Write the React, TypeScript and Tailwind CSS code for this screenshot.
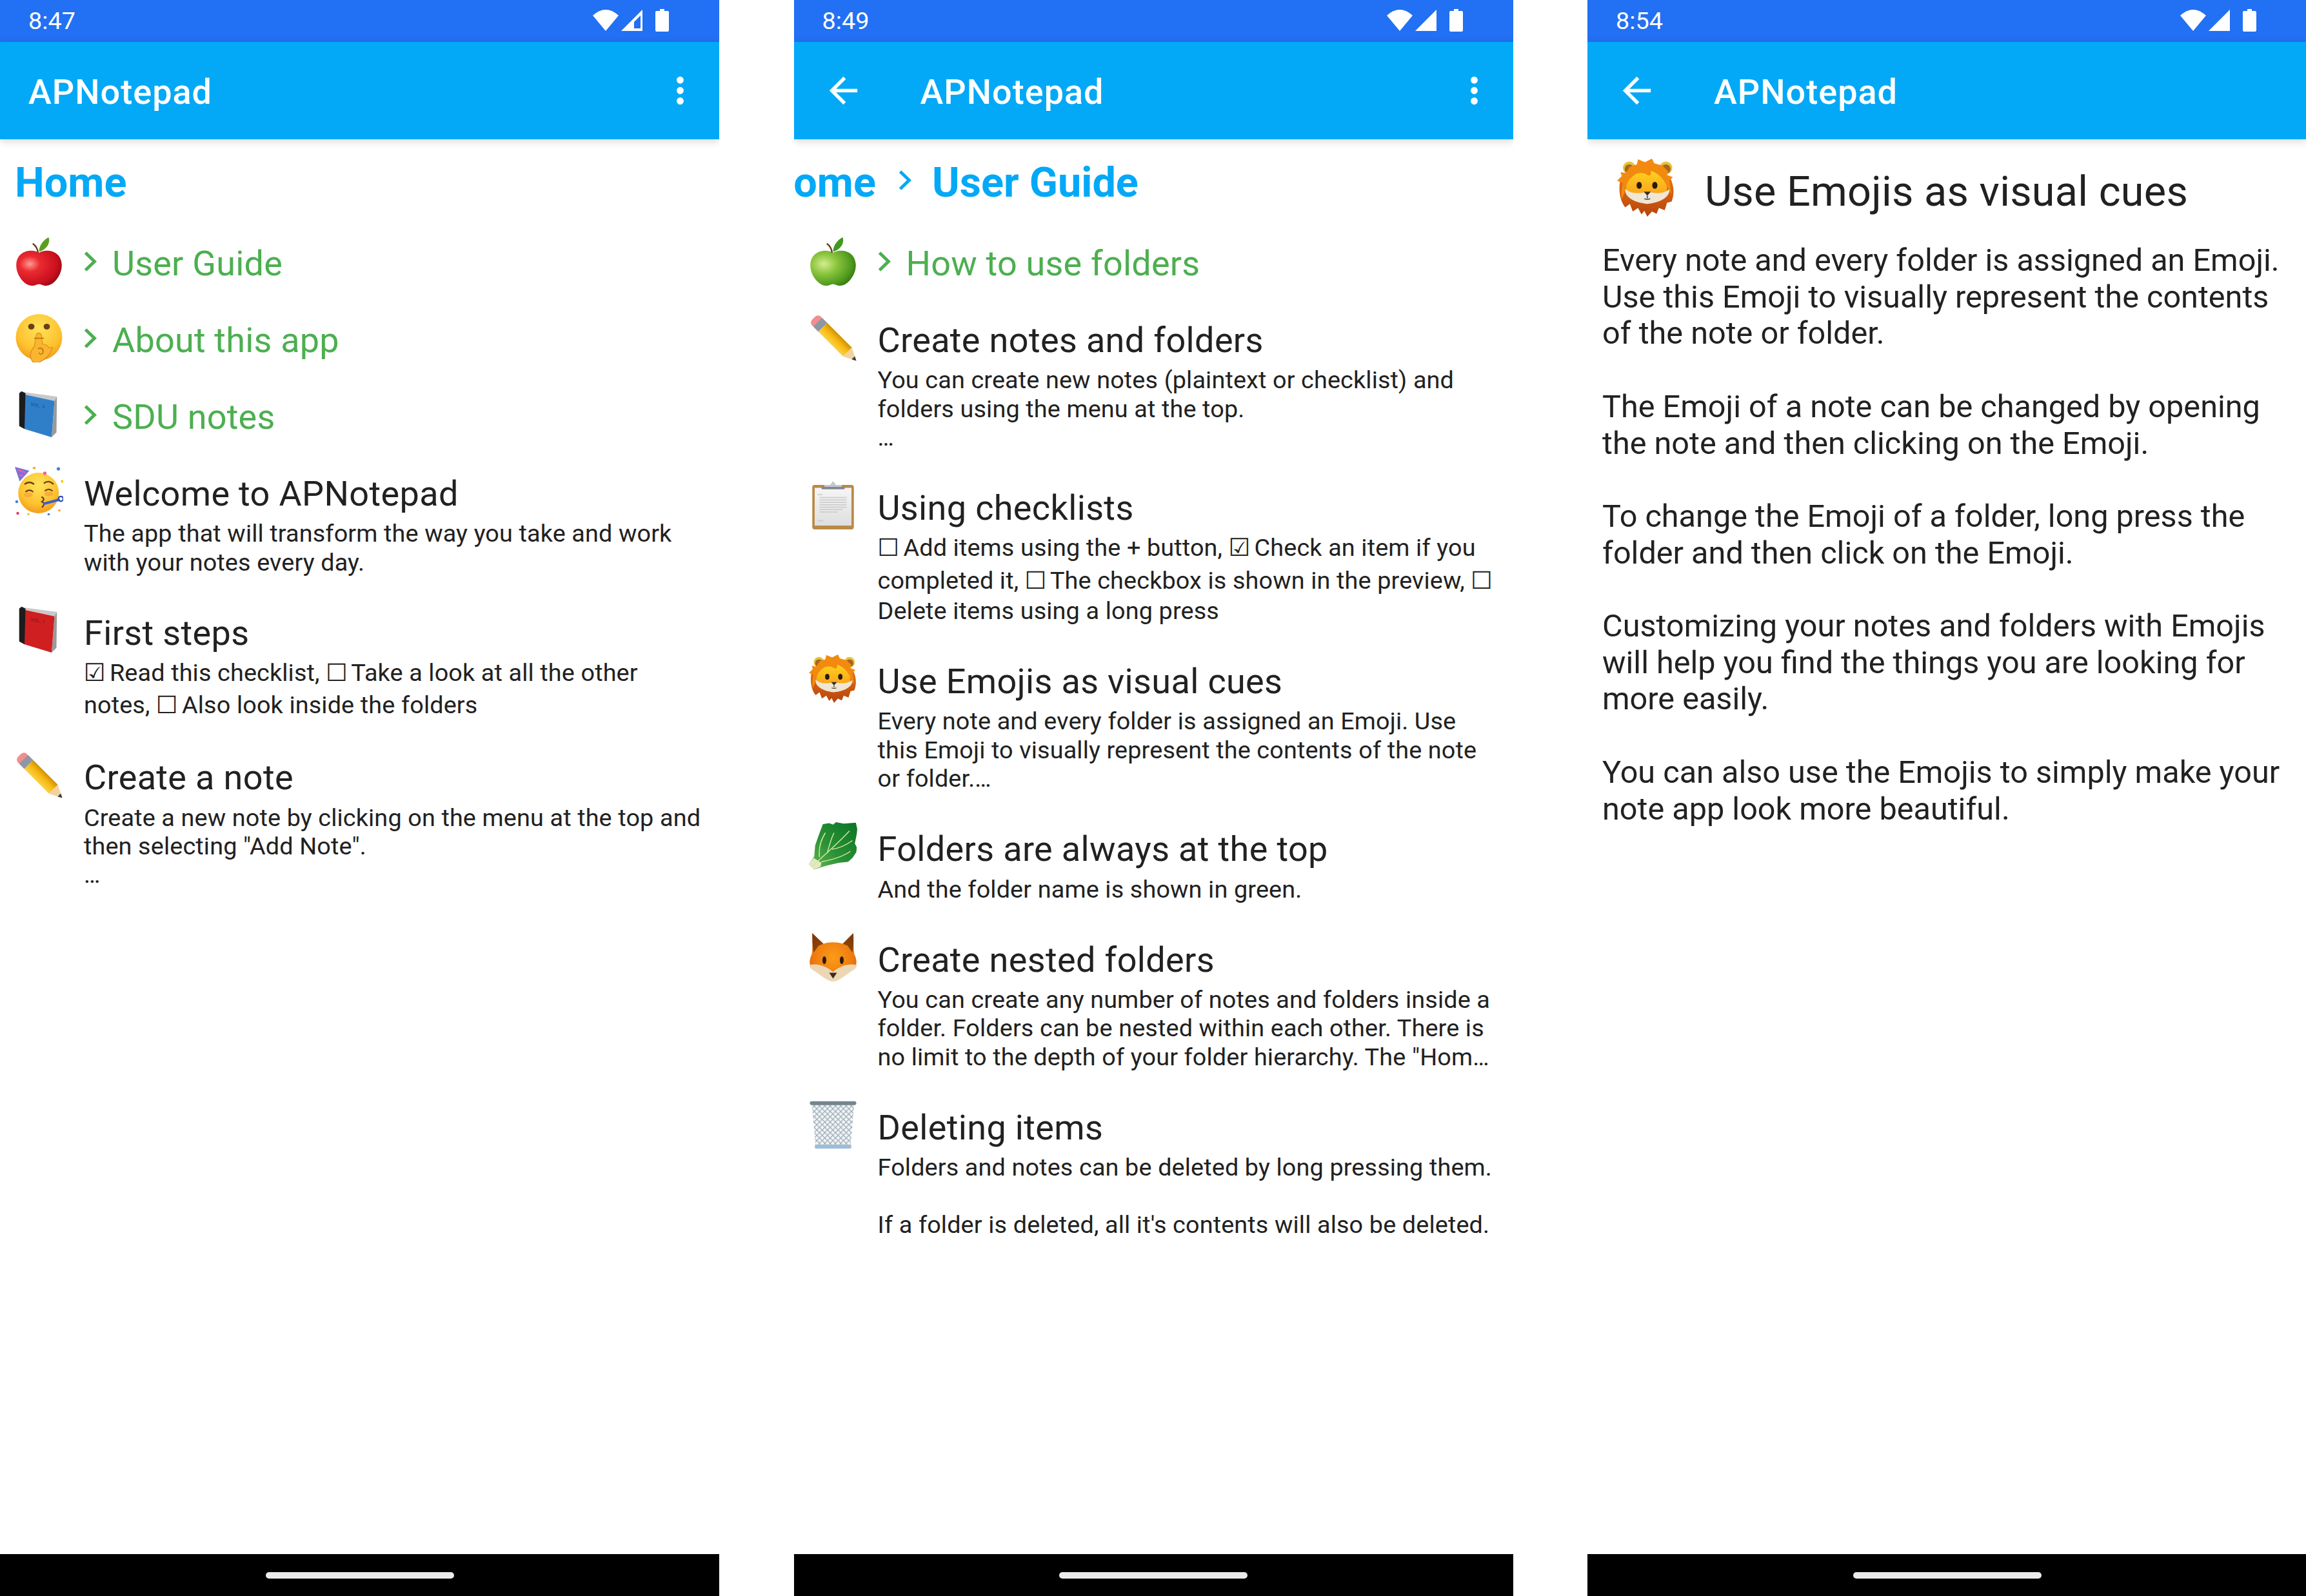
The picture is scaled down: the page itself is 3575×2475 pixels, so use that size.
import React from "react";

const Defs = () => (
  <svg width="0" height="0" className="absolute">
    <defs>
      <radialGradient id="redApple" cx="0.3" cy="0.38" r="0.8">
        <stop offset="0" stopColor="#ff9a90" />
        <stop offset="0.28" stopColor="#ea2a30" />
        <stop offset="0.75" stopColor="#c80f1c" />
        <stop offset="1" stopColor="#7e0b12" />
      </radialGradient>
      <radialGradient id="greenApple" cx="0.3" cy="0.38" r="0.8">
        <stop offset="0" stopColor="#d4ec90" />
        <stop offset="0.35" stopColor="#8cc63f" />
        <stop offset="0.75" stopColor="#4f9a1e" />
        <stop offset="1" stopColor="#2c6a10" />
      </radialGradient>
      <radialGradient id="face" cx="0.5" cy="0.3" r="0.8">
        <stop offset="0" stopColor="#ffe25a" />
        <stop offset="0.6" stopColor="#fdc22f" />
        <stop offset="1" stopColor="#f08a14" />
      </radialGradient>
      <linearGradient id="pencilBody" x1="0" x2="1" y1="0" y2="0">
        <stop offset="0" stopColor="#fbd24a" />
        <stop offset="0.55" stopColor="#f6b90f" />
        <stop offset="1" stopColor="#d08f08" />
      </linearGradient>
      <linearGradient id="beard" x1="0" x2="0" y1="0" y2="1">
        <stop offset="0" stopColor="#e8700f" />
        <stop offset="1" stopColor="#b4440e" />
      </linearGradient>
      <linearGradient id="lionFace" x1="0" x2="0" y1="0" y2="1">
        <stop offset="0" stopColor="#ffd21f" />
        <stop offset="1" stopColor="#f79a1a" />
      </linearGradient>
      <radialGradient id="foxFur" cx="0.5" cy="0.5" r="0.6">
        <stop offset="0" stopColor="#fb9c18" />
        <stop offset="0.7" stopColor="#ee7a0e" />
        <stop offset="1" stopColor="#d65f0a" />
      </radialGradient>
      <linearGradient id="leaf" x1="1" x2="0" y1="0" y2="1">
        <stop offset="0" stopColor="#0b7426" />
        <stop offset="0.55" stopColor="#2a9135" />
        <stop offset="1" stopColor="#6dbb55" />
      </linearGradient>
      <linearGradient id="paper" x1="0" x2="0" y1="0" y2="1">
        <stop offset="0" stopColor="#f6f6f6" />
        <stop offset="1" stopColor="#dedede" />
      </linearGradient>
      <pattern id="mesh" width="11" height="11" patternUnits="userSpaceOnUse">
        <path d="M0 0L11 11M11 0L0 11" stroke="#98a9b4" strokeWidth="1.6" fill="none" />
      </pattern>
    </defs>
  </svg>
);

const Apple = ({ green }: { green?: boolean }) => (
  <svg viewBox="0 0 100 100" className="w-full h-full">
    <path d="M50 32C40 24 5 24 3 56C2 78 20 100 35 100C43 100 45 97 50 97C55 97 57 100 65 100C80 100 98 78 97 56C95 24 60 24 50 32Z" fill={green ? "url(#greenApple)" : "url(#redApple)"} />
    <path d="M48 32C47 24 43 17 37 13" stroke="#6b3a16" strokeWidth="3" fill="none" />
    <path d="M50 30C50 16 60 5 70 0C74 12 66 25 50 30Z" fill={green ? "#3f9a1e" : "#5a9e1f"} />
  </svg>
);

const Shush = () => (
  <svg viewBox="0 0 100 100" className="w-full h-full">
    <circle cx="50" cy="48" r="48" fill="url(#face)" />
    <ellipse cx="34" cy="26" rx="6.5" ry="6" fill="#6a4012" />
    <ellipse cx="66" cy="26" rx="6.5" ry="6" fill="#6a4012" />
    <path d="M36 98C30 88 32 76 40 68L44 44C45 38 54 38 55 44L57 62C64 62 68 66 71 70L78 69C74 82 64 94 50 100C45 101 40 101 36 98Z" fill="#f9b52f" stroke="#dd8c14" strokeWidth="1.5" />
    <path d="M40 50H60M48 72C54 68 60 72 58 80C56 84 52 84 50 80" stroke="#b8690d" strokeWidth="2" fill="none" />
  </svg>
);

const Book = ({ red }: { red?: boolean }) => (
  <svg viewBox="0 0 100 100" className="w-full h-full">
    <path d="M12 2L87 12L82 21L20 7.5Z" fill="#c9c9c9" />
    <path d="M76 96L82 21L87 12L86 86Z" fill="#9a9a9a" />
    <path d="M20 7.5L82 21L76 96L20 79Z" fill={red ? "#cf1f20" : "#2f7fc8"} />
    <path d="M9 5L14 1L22 5L20 79L9 73Z" fill="#1c1c1c" />
    <text x="32" y="31" transform="rotate(10 32 31)" fontSize="10" fontWeight="700" fill={red ? "#9f1717" : "#1f5f9a"}>{red ? "VOL. 1" : "VOL. 3"}</text>
  </svg>
);

const Party = () => (
  <svg viewBox="0 0 100 100" className="w-full h-full">
    <circle cx="49" cy="54" r="42" fill="url(#face)" />
    <ellipse cx="28" cy="58" rx="9" ry="5" fill="#f6843a" opacity="0.45" />
    <ellipse cx="70" cy="56" rx="9" ry="5" fill="#f6843a" opacity="0.45" />
    <path d="M0 0L30 8L10 30Z" fill="#7b6fd8" />
    <path d="M6 6L22 12M9 16L17 19" stroke="#ef5fae" strokeWidth="3" />
    <path d="M20 36Q30 28 40 36M60 34Q70 26 80 36M22 52Q30 44 38 52M62 50Q70 43 78 50" stroke="#6a4112" strokeWidth="3" fill="none" />
    <path d="M55 62Q64 66 56 72Q64 76 56 84" stroke="#6a4112" strokeWidth="3" fill="none" />
    <path d="M58 74L92 65L94 70L60 79Z" fill="#3f5fd0" />
    <circle cx="95" cy="66" r="5" fill="none" stroke="#2f4cb5" strokeWidth="3" />
    <circle cx="62" cy="13" r="3.5" fill="#f45a9a" />
    <circle cx="90" cy="4" r="3.5" fill="#3f7fe0" />
    <circle cx="98" cy="30" r="3" fill="#f2c81a" />
    <circle cx="40" cy="2" r="3" fill="#f2b81a" />
    <circle cx="4" cy="72" r="3" fill="#3f7fe0" />
    <circle cx="6" cy="96" r="3" fill="#e63a7a" />
    <circle cx="28" cy="98" r="2.5" fill="#f2c81a" />
    <circle cx="70" cy="98" r="2.5" fill="#3f7fe0" />
    <circle cx="92" cy="90" r="2.5" fill="#f2a24a" />
  </svg>
);

const Pencil = () => (
  <svg viewBox="0 0 100 100" className="w-full h-full">
    <g transform="rotate(-45 50 50)">
      <rect x="37" y="-7" width="26" height="18" rx="9" fill="#ef8f8f" />
      <rect x="37" y="5" width="26" height="15" fill="#8f97a3" />
      <rect x="37" y="20" width="26" height="72" fill="url(#pencilBody)" />
      <path d="M37 92L63 92L50 118Z" fill="#f2d3a0" />
      <path d="M45.5 109L54.5 109L50 118Z" fill="#3a3a3a" />
    </g>
  </svg>
);

const Clipboard = () => (
  <svg viewBox="0 0 100 100" className="w-full h-full">
    <rect x="7" y="8" width="86" height="92" rx="5" fill="#b98a47" />
    <rect x="12" y="14" width="76" height="78" fill="url(#paper)" />
    <path d="M32 8H44L50 0L56 8H68V15H32Z" fill="#c2c8ce" />
    <rect x="26" y="12" width="48" height="5" rx="2" fill="#808890" />
    <path d="M18 28H28M22 34H78M22 39H78M22 44H78M22 49H78M22 54H78M22 59H70M22 64H60M18 82H30" stroke="#c9c9c9" strokeWidth="1.8" />
  </svg>
);

const Lion = () => (
  <svg viewBox="0 0 100 100" className="w-full h-full">
    <path d="M5 38C2 58 6 74 14 84L22 78L27 91L36 85L42 96L47 90L52 100L60 91L68 95L72 85L82 89L86 76L94 74C99 60 98 48 92 34Z" fill="url(#beard)" />
    <circle cx="21" cy="16" r="11" fill="#e9c13a" />
    <circle cx="21" cy="18" r="8" fill="#a5671b" />
    <circle cx="84" cy="16" r="11" fill="#e9c13a" />
    <circle cx="84" cy="18" r="8" fill="#a5671b" />
    <path d="M15 52C16 32 34 20 52 20C72 20 86 34 86 52L84 62C70 74 32 74 16 62Z" fill="url(#lionFace)" />
    <path d="M14 52C24 62 40 60 52 57C66 60 80 62 90 52C92 66 74 76 52 78C30 76 12 66 14 52Z" fill="#efe6d6" />
    <path d="M0 38L8 30L6 23L15 25L22 14L34 10L36 1L48 6L60 0L64 8L78 12L88 22L86 28L96 32L90 38L94 62L86 48C80 34 70 24 58 21C60 27 56 31 52 28C45 23 36 24 30 28C18 36 13 50 13 58L8 70C6 60 8 48 10 42Z" fill="#f28a10" />
    <ellipse cx="38" cy="46" rx="4.5" ry="6" fill="#2a1a0c" />
    <ellipse cx="65" cy="46" rx="4.5" ry="6" fill="#2a1a0c" />
    <path d="M46 57H58L52 64Z" fill="#3a2a20" />
    <path d="M52 64V68M47 69Q52 71 57 69" stroke="#3a2a20" strokeWidth="1.6" fill="none" />
  </svg>
);

const Lettuce = () => (
  <svg viewBox="0 0 100 100" className="w-full h-full">
    <path d="M11 98L0 87L11 71L13 48L20 28L29 4L42 2L50 5L56 0L72 3L97 1L100 14L99 24L97 34L95 44L99 52L98 62L90 74L81 82L62 84L40 89L26 93Z" fill="url(#leaf)" />
    <path d="M11 98L0 87L10 74L26 84L24 92Z" fill="#e5e8bf" />
    <path d="M8 90C32 68 58 46 84 18M22 72C20 56 24 38 34 22M38 64C42 48 46 34 52 22M26 82C46 78 70 72 86 60M48 56C62 54 76 48 90 38" stroke="#cfe8a2" strokeWidth="2" fill="none" />
  </svg>
);

const Fox = () => (
  <svg viewBox="0 0 100 100" className="w-full h-full">
    <path d="M7 0L30 22C42 18 58 18 70 22L92 0C93 18 92 34 94 44C100 56 100 68 92 72L50 100L8 72C0 68 0 56 6 44C8 34 7 18 7 0Z" fill="url(#foxFur)" />
    <path d="M7 0L30 22L20 26L10 40C8 30 7 16 7 0Z M92 0L70 22L80 26L90 40C92 30 92 16 92 0Z" fill="#5a2a0c" opacity="0.7" />
    <path d="M1 66C14 62 34 66 50 80C66 66 86 62 99 66C98 74 92 76 86 80C72 90 60 100 50 100C40 100 28 90 14 80C8 76 2 74 1 66Z" fill="#ecd6b4" />
    <ellipse cx="32" cy="56" rx="4" ry="8" fill="#2a1a10" />
    <ellipse cx="68" cy="56" rx="4" ry="8" fill="#2a1a10" />
    <path d="M42 82H58L50 94Z" fill="#3a2a20" />
  </svg>
);

const Trash = () => (
  <svg viewBox="0 0 100 100" className="w-full h-full">
    <path d="M6 5H94L86 96H14Z" fill="#f2f5f7" />
    <path d="M6 5H94L86 96H14Z" fill="url(#mesh)" />
    <rect x="2" y="1" width="96" height="8" rx="4" fill="#75858f" />
    <rect x="12" y="91" width="76" height="8" rx="4" fill="#9dbdd6" />
  </svg>
);

const Chevron = ({ color }: { color: string }) => (
  <svg viewBox="0 0 20 31" className="w-[20px] h-[31px] shrink-0">
    <path d="M2.5 2L16.5 15.5L2.5 29" fill="none" stroke={color} strokeWidth="5" />
  </svg>
);

const StatusIcons = ({ hollow }: { hollow?: boolean }) => (
  <svg viewBox="0 0 118 65" className="w-[118px] h-[65px]">
    <path d="M0 24Q20 6 40 24L20 48Z" fill="#fff" />
    <path d="M44 48L77 15V48Z" fill="#fff" />
    {hollow && <path d="M64 44V34L74 24V44Z" fill="#2270f3" />}
    <path d="M104 14H111V17H116A2 2 0 0 1 118 19V47A2 2 0 0 1 116 49H99A2 2 0 0 1 97 47V19A2 2 0 0 1 99 17H104Z" fill="#fff" />
  </svg>
);

const Phone = ({ time, back, more, hollow, children }: { time: string; back?: boolean; more?: boolean; hollow?: boolean; children: React.ReactNode }) => (
  <div className="w-[1115px] h-[2475px] shrink-0 flex flex-col bg-white overflow-hidden">
    <div className="h-[65px] bg-[#2270f3] flex items-center justify-between pl-[44px] pr-[78px] text-white text-[37.8px]">
      <span>{time}</span>
      <StatusIcons hollow={hollow} />
    </div>
    <div className="h-[151px] bg-[#03a9f6] flex items-center text-white relative z-10 shadow-[0_3px_12px_rgba(0,0,0,0.16)]">
      {back ? (
        <svg viewBox="0 0 24 24" className="w-[65px] h-[65px] ml-[44px] mr-[87px]">
          <path d="M20 11H7.83l5.59-5.59L12 4l-8 8 8 8 1.41-1.41L7.83 13H20v-2z" fill="#fff" />
        </svg>
      ) : (
        <div className="w-[44px]" />
      )}
      <span className="text-[54px] font-medium flex-1 tracking-[1px] pt-[3px]">APNotepad</span>
      {more && (
        <svg viewBox="0 0 24 24" className="w-[65px] h-[65px] mr-[28px]">
          <path d="M12 8c1.1 0 2-.9 2-2s-.9-2-2-2-2 .9-2 2 .9 2 2 2zm0 2c-1.1 0-2 .9-2 2s.9 2 2 2 2-.9 2-2-.9-2-2-2zm0 6c-1.1 0-2 .9-2 2s.9 2 2 2 2-.9 2-2-.9-2-2-2z" fill="#fff" />
        </svg>
      )}
    </div>
    <div className="flex-1 min-h-0">{children}</div>
    <div className="h-[65px] bg-black flex items-center justify-center">
      <div className="w-[292px] h-[10px] rounded-full bg-[#ebebeb]" />
    </div>
  </div>
);

const Crumb = ({ children, className = "" }: { children: React.ReactNode; className?: string }) => (
  <div className={`h-[133px] pt-[3px] flex items-center text-[64.8px] font-bold text-[#03a9f6] whitespace-nowrap ${className}`}>{children}</div>
);

const Folder = ({ icon, name }: { icon: React.ReactNode; name: string }) => (
  <div className="h-[119px] flex pl-[23px]">
    <div className="w-[75px] h-[75px] mt-[19px] shrink-0">{icon}</div>
    <div className="flex items-start ml-[32px] pt-[41px]">
      <Chevron color="#4caf50" />
    </div>
    <span className="ml-[24px] text-[54px] leading-[63.3px] text-[#4caf50] pt-[28px] tracking-[0.2px]">{name}</span>
  </div>
);

const Checked = ({ text }: { text: string }) => (
  <>
    {text.split(/([☐☑])/).map((part, i) =>
      part === "☐" || part === "☑" ? (
        <span key={i} className="tracking-[-3.5px]">{part}</span>
      ) : (
        <span key={i}>{part}</span>
      )
    )}
  </>
);

const Note = ({ icon, title, lines }: { icon: React.ReactNode; title: string; lines: (string | [string])[] }) => (
  <div className="flex pl-[23px] pr-[20px] pb-[28px]">
    <div className="w-[75px] h-[75px] mt-[18px] shrink-0">{icon}</div>
    <div className="ml-[32px] pt-[28px] flex-1 text-[#212121]">
      <div className="text-[54px] leading-[63.3px] tracking-[0.35px]">{title}</div>
      <div className="mt-[8px] text-[37.8px] tracking-[0.13px]">
        {lines.map((l, i) =>
          typeof l === "string" ? (
            <div key={i} className="leading-[44.3px] min-h-[44.3px] whitespace-nowrap"><Checked text={l} /></div>
          ) : (
            <div key={i} className="leading-[49px] pt-[4px] whitespace-nowrap"><Checked text={l[0]} /></div>
          )
        )}
      </div>
    </div>
  </div>
);

export default function App() {
  return (
    <div className="w-[3575px] h-[2475px] overflow-hidden flex gap-[115.5px] bg-white font-['Roboto','DejaVu_Sans',sans-serif]">
      <Defs />
      <Phone time="8:47" more hollow>
        <Crumb className="pl-[23px]">Home</Crumb>
        <Folder icon={<Apple />} name="User Guide" />
        <Folder icon={<Shush />} name="About this app" />
        <Folder icon={<Book />} name="SDU notes" />
        <Note icon={<Party />} title="Welcome to APNotepad" lines={["The app that will transform the way you take and work", "with your notes every day."]} />
        <Note icon={<Book red />} title="First steps" lines={["☑ Read this checklist, ☐ Take a look at all the other", ["notes, ☐ Also look inside the folders"]]} />
        <Note icon={<Pencil />} title="Create a note" lines={["Create a new note by clicking on the menu at the top and", 'then selecting "Add Note".', "…"]} />
      </Phone>
      <Phone time="8:49" back more>
        <Crumb>
          <span className="-ml-[46px]">Home</span>
          <span className="ml-[35px] mr-[32px] -mt-[10px]"><Chevron color="#03a9f6" /></span>
          <span>User Guide</span>
        </Crumb>
        <Folder icon={<Apple green />} name="How to use folders" />
        <Note icon={<Pencil />} title="Create notes and folders" lines={["You can create new notes (plaintext or checklist) and", "folders using the menu at the top.", "…"]} />
        <Note icon={<Clipboard />} title="Using checklists" lines={["☐ Add items using the + button, ☑ Check an item if you", ["completed it, ☐ The checkbox is shown in the preview, ☐"], "Delete items using a long press"]} />
        <Note icon={<Lion />} title="Use Emojis as visual cues" lines={["Every note and every folder is assigned an Emoji. Use", "this Emoji to visually represent the contents of the note", "or folder.…"]} />
        <Note icon={<Lettuce />} title="Folders are always at the top" lines={["And the folder name is shown in green."]} />
        <Note icon={<Fox />} title="Create nested folders" lines={["You can create any number of notes and folders inside a", "folder. Folders can be nested within each other. There is", 'no limit to the depth of your folder hierarchy. The "Hom…']} />
        <Note icon={<Trash />} title="Deleting items" lines={["Folders and notes can be deleted by long pressing them.", "", "If a folder is deleted, all it's contents will also be deleted."]} />
      </Phone>
      <Phone time="8:54" back>
        <div className="h-[160px] flex items-center pl-[46px] text-[#212121]">
          <div className="w-[90px] h-[94px] shrink-0 -mt-[10px]"><Lion /></div>
          <span className="ml-[46px] pt-[3px] text-[64.8px] tracking-[0.25px]">Use Emojis as visual cues</span>
        </div>
        <div className="px-[23px] text-[48.6px] leading-[56.7px] text-[#212121] whitespace-pre-line">
          {"Every note and every folder is assigned an Emoji. Use this Emoji to visually represent the contents of the note or folder.\n\nThe Emoji of a note can be changed by opening the note and then clicking on the Emoji.\n\nTo change the Emoji of a folder, long press the folder and then click on the Emoji.\n\nCustomizing your notes and folders with Emojis will help you find the things you are looking for more easily.\n\nYou can also use the Emojis to simply make your note app look more beautiful."}
        </div>
      </Phone>
    </div>
  );
}
